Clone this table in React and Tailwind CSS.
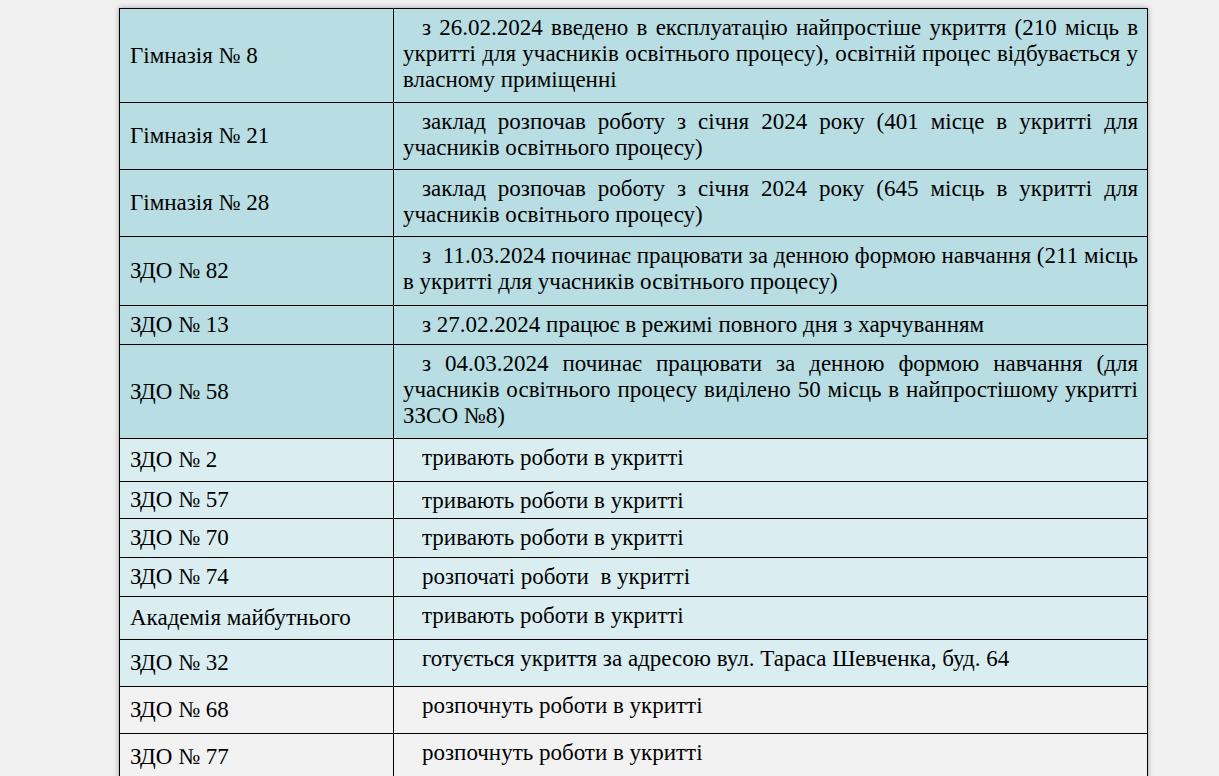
import React from 'react';

const rows = [
  {
    name: 'Гімназія № 8',
    text: 'з 26.02.2024 введено в експлуатацію найпростіше укриття (210 місць в укритті для учасників освітнього процесу), освітній процес відбувається у власному приміщенні',
    h: 'h-[93px]',
    bg: 'bg-[#b8dde2]',
  },
  {
    name: 'Гімназія № 21',
    text: 'заклад розпочав роботу з січня 2024 року (401 місце в укритті для учасників освітнього процесу)',
    h: 'h-[67px]',
    bg: 'bg-[#b8dde2]',
  },
  {
    name: 'Гімназія № 28',
    text: 'заклад розпочав роботу з січня 2024 року (645 місць в укритті для учасників освітнього процесу)',
    h: 'h-[67px]',
    bg: 'bg-[#b8dde2]',
  },
  {
    name: 'ЗДО № 82',
    text: 'з \u00a011.03.2024 починає працювати за денною формою навчання (211 місць в укритті для учасників освітнього процесу)',
    h: 'h-[69px]',
    bg: 'bg-[#b8dde2]',
  },
  {
    name: 'ЗДО № 13',
    text: 'з 27.02.2024 працює в режимі повного дня з харчуванням',
    h: 'h-[39px]',
    bg: 'bg-[#b8dde2]',
  },
  {
    name: 'ЗДО № 58',
    text: 'з 04.03.2024 починає працювати за денною формою навчання (для учасників освітнього процесу виділено 50 місць в найпростішому укритті ЗЗСО №8)',
    h: 'h-[94px]',
    bg: 'bg-[#b8dde2]',
  },
  { name: 'ЗДО № 2', text: 'тривають роботи в укритті', h: 'h-[43px]', bg: 'bg-[#daeef1]' },
  { name: 'ЗДО № 57', text: 'тривають роботи в укритті', h: 'h-[37px]', bg: 'bg-[#daeef1]' },
  { name: 'ЗДО № 70', text: 'тривають роботи в укритті', h: 'h-[39px]', bg: 'bg-[#daeef1]' },
  { name: 'ЗДО № 74', text: 'розпочаті роботи \u00a0в укритті', h: 'h-[39px]', bg: 'bg-[#daeef1]' },
  { name: 'Академія майбутнього', text: 'тривають роботи в укритті', h: 'h-[43px]', bg: 'bg-[#daeef1]' },
  {
    name: 'ЗДО № 32',
    text: 'готується укриття за адресою вул. Тараса Шевченка, буд. 64',
    h: 'h-[47px]',
    bg: 'bg-[#daeef1]',
  },
  { name: 'ЗДО № 68', text: 'розпочнуть роботи в укритті', h: 'h-[47px]', bg: 'bg-[#f2f2f2]' },
  { name: 'ЗДО № 77', text: 'розпочнуть роботи в укритті', h: 'h-[47px]', bg: 'bg-[#f2f2f2]' },
];

export default function App() {
  return (
    <div
      className="min-h-screen bg-[#f0f0f0] pt-[8px] pl-[119px] text-black text-[23px] leading-[26px]"
      style={{ fontFamily: '"Liberation Serif", "Times New Roman", serif' }}
    >
      <div className="w-[1029px] border border-black shadow-[0_0_5px_rgba(0,0,0,0.35)]">
        {rows.map((r, i) => (
          <div
            key={r.name + i}
            className={`flex box-border ${r.h} ${r.bg} ${i > 0 ? 'border-t border-black' : ''}`}
          >
            <div className="w-[274px] shrink-0 border-r border-black pl-[10px] flex items-center">
              {r.name}
            </div>
            <div className="flex-1 pl-[9px] pr-[9px] pt-[6px] text-justify indent-[19px]">
              {r.text}
            </div>
          </div>
        ))}
      </div>
    </div>
  );
}
